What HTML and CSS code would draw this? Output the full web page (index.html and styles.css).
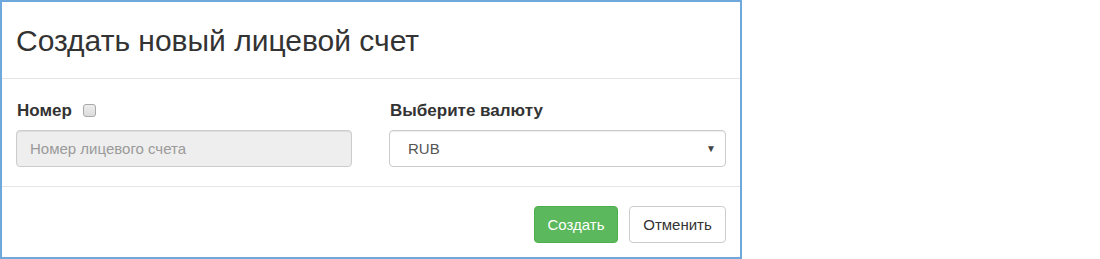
FILE: index.html
```html
<!DOCTYPE html>
<html lang="ru">
<head>
<meta charset="utf-8">
<title>Создать новый лицевой счет</title>
<link rel="stylesheet" href="styles.css">
</head>
<body>
<div class="modal">
  <div class="modal-header">
    <h2 class="modal-title">Создать новый лицевой счет</h2>
  </div>
  <div class="modal-body">
    <div class="field">
      <div class="label-row">
        <label class="label">Номер</label>
        <span class="checkbox"></span>
      </div>
      <div class="input disabled">Номер лицевого счета</div>
    </div>
    <div class="field">
      <div class="label-row">
        <label class="label">Выберите валюту</label>
      </div>
      <div class="input select">
        <span class="select-value">RUB</span>
        <span class="caret">▼</span>
      </div>
    </div>
  </div>
  <div class="modal-footer">
    <button class="btn btn-success">Создать</button>
    <button class="btn btn-default">Отменить</button>
  </div>
</div>
</body>
</html>
```
FILE: styles.css
```css
* { box-sizing: border-box; }
html, body { margin: 0; padding: 0; background: #fff; }
body {
  font-family: "Liberation Sans", Arial, sans-serif;
  color: #333;
  width: 1100px;
  height: 259px;
}
.modal {
  width: 742px;
  height: 259px;
  border: 2px solid #6fa8dc;
  display: flex;
  flex-direction: column;
  background: #fff;
}
.modal-header {
  height: 77px;
  border-bottom: 1px solid #e5e5e5;
  padding: 0 14px;
  display: flex;
  align-items: center;
}
.modal-title {
  margin: 0;
  font-size: 30px;
  font-weight: normal;
  line-height: 1;
  padding-top: 2px;
}
.modal-body {
  height: 108px;
  border-bottom: 1px solid #e5e5e5;
  padding: 20px 14px 0;
  display: grid;
  grid-template-columns: 336px 337px;
  column-gap: 37px;
  align-content: start;
}
.label-row {
  height: 31px;
  display: flex;
  align-items: center;
  gap: 11px;
  padding-left: 1px;
  padding-bottom: 8px;
}
.label {
  font-size: 17px;
  font-weight: bold;
}
.checkbox {
  width: 13px;
  height: 13px;
  border: 1px solid #a9a9a9;
  border-radius: 3px;
  background: linear-gradient(#ededed, #dcdcdc);
}
.input {
  height: 37px;
  border: 1px solid #ccc;
  border-radius: 4px;
  display: flex;
  align-items: center;
  font-size: 15px;
  box-shadow: inset 0 1px 1px rgba(0,0,0,0.075);
}
.input.disabled {
  background: #eee;
  color: #9a9a9a;
  padding-left: 13px;
}
.input.select {
  background: #fff;
  color: #555;
  padding-left: 18px;
  padding-right: 9px;
  justify-content: space-between;
}
.caret {
  font-size: 10px;
  color: #444;
}
.modal-footer {
  flex: 1;
  padding: 19px 14px 0;
  display: flex;
  justify-content: flex-end;
  align-items: flex-start;
  gap: 11px;
}
.btn {
  height: 37px;
  font-family: "Liberation Sans", Arial, sans-serif;
  font-size: 15px;
  border-radius: 4px;
  border: 1px solid;
  padding: 0 12px;
  margin: 0;
}
.btn-success {
  width: 84px;
  background: #5cb85c;
  border-color: #4cae4c;
  color: #fff;
}
.btn-default {
  width: 97px;
  background: #fff;
  border-color: #ccc;
  color: #333;
}
```
